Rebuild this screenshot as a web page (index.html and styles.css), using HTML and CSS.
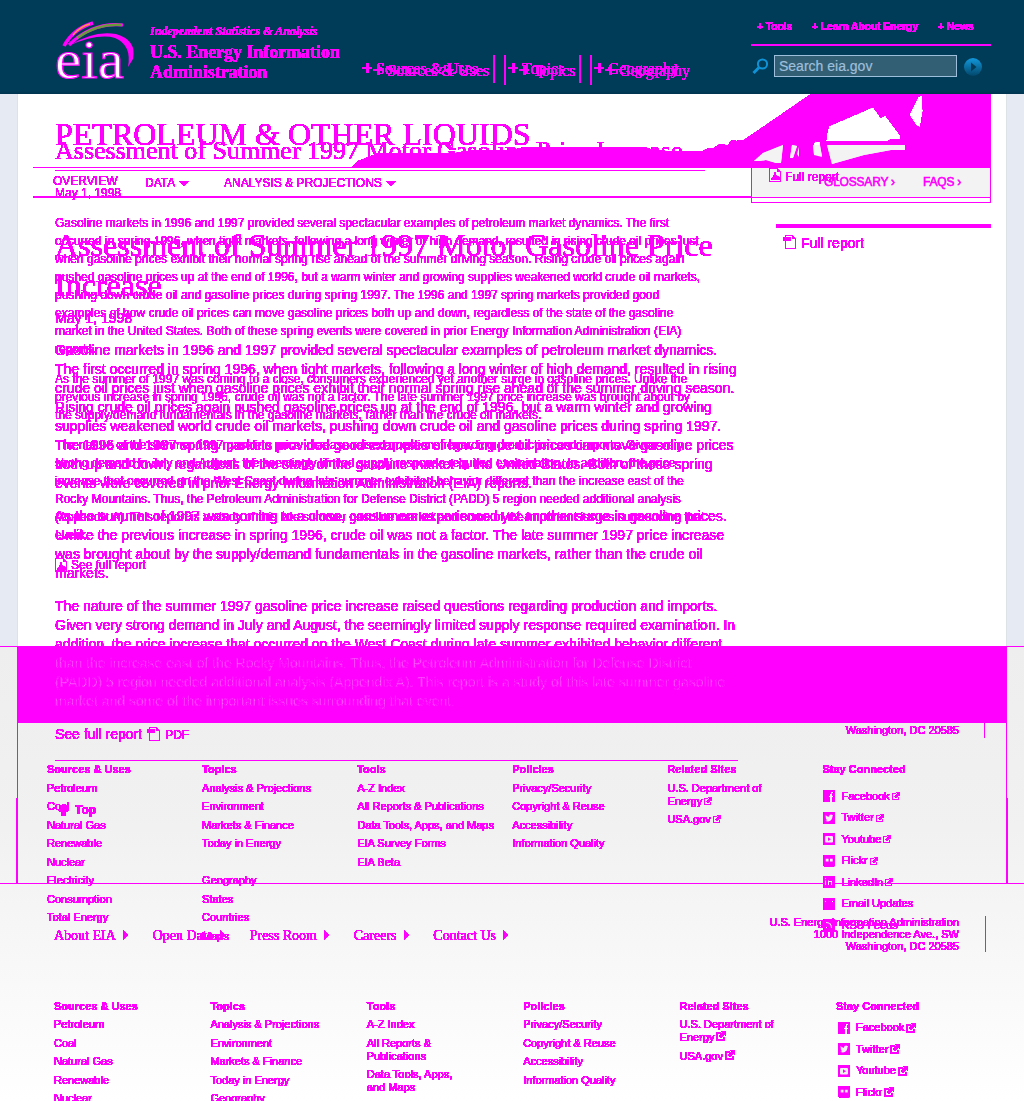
FILE: index.html
```html
<!DOCTYPE html>
<html lang="en">
<head>
<meta charset="utf-8">
<title>Assessment of Summer 1997 Motor Gasoline Price Increase</title>
<link rel="stylesheet" href="styles.css">
</head>
<body>
<svg class="defs" width="0" height="0">
  <filter id="crisp" x="0" y="0" width="100%" height="100%" color-interpolation-filters="sRGB"><feComponentTransfer><feFuncA type="linear" slope="40" intercept="-3"/></feComponentTransfer></filter>
  <symbol id="ext" viewBox="0 0 8 8"><path d="M3.5 1.5H.5v6h6V5" fill="none" stroke="currentColor" stroke-width="1"/><path d="M4 0h4v4L6.8 2.8 4 5.6 2.6 4.2 5.3 1.4z" fill="currentColor"/></symbol>
  <symbol id="fb" viewBox="0 0 12 12"><path fill-rule="evenodd" fill="currentColor" d="M0 0h12v12H9V7h1.6V5.500H9V4q0-1 1.700-.8V1.900Q7 1.300 7 4.300v1.200H5.600V7H7v5H0z"/></symbol>
  <symbol id="tw" viewBox="0 0 12 12"><path fill="currentColor" d="M0 0h12v12H0z"/><path fill="#f1f1f1" d="M2.500 3q1.500 1.800 3.500 1.700Q6 2.500 8 2.500q.8 0 1.400.6L10 3l-.5 1.300Q9.300 9.300 4.800 9.400 3.500 9.400 2.300 8.800q1.500 0 2-.8L3 7.200z"/></symbol>
  <symbol id="yt" viewBox="0 0 12 12"><path fill="currentColor" d="M0 0h12v12H0z"/><rect x="2" y="3" width="8" height="6.500" rx="1" fill="#f1f1f1"/><path fill="currentColor" d="M5 4.300l3 1.900L5 8z"/></symbol>
  <symbol id="fl" viewBox="0 0 13 13"><path fill="currentColor" d="M0 0h13v11l-1.500 2H2L0 11z"/><path fill="#f1f1f1" d="M3 4h3v3H3zM7.500 4h3v3h-3z"/></symbol>
  <symbol id="li" viewBox="0 0 12 12"><path fill="currentColor" d="M0 0h12v12H0z"/><path fill="#f1f1f1" d="M2 2h1v1H2zM2 4.500h1V9H2zM5 4.500h1V5h3v4H8V6H6v3H5z"/></symbol>
  <symbol id="em" viewBox="0 0 12 12"><path fill="currentColor" d="M0 0h12v12H0z"/><path fill="#f1f1f1" d="M2 3h1v1H2zM9 3h1v1H9z"/></symbol>
  <symbol id="rss" viewBox="0 0 12 12"><path fill="currentColor" d="M0 0h12v12H0z"/><path fill="#f1f1f1" d="M3 8h1v1H3zM3 3q6 0 6 6H8q0-5-5-5z"/></symbol>
  <symbol id="doc" viewBox="0 0 13 14"><path d="M2.500 5V.5h7l3 3v10h-10V5" fill="none" stroke="currentColor"/><path fill="currentColor" d="M0 2h8v4H0zM9 0l4 4H9z"/></symbol>
  <symbol id="pdf" viewBox="0 0 12 14"><path d="M.5.5h8l3 3v10H.5z" fill="none" stroke="currentColor"/><path d="M8 0l4 4H8zM2 12l3-5V4h2v3l4 3v2z" fill="currentColor"/></symbol>
</svg>

<div class="stack">
  <!-- page shell -->
  <div class="shell">
    <div class="shell-head"></div>
    <div class="shell-body"><div class="shell-paper"></div></div>
    <div class="shell-foot">
      <div class="band"></div>
      <div class="side side-thin"></div>
      <div class="side side-thick"></div>
      <div class="foot-rule"></div>
    </div>
  </div>

  <!-- masthead -->
  <header class="masthead">
    <svg class="logo" viewBox="55 20 80 62" width="80" height="62">
      <g fill="none" stroke-linecap="butt">
        <path d="M64 46Q73 29 93 23" stroke="#f0f" stroke-width="3.600"/><path d="M73 35Q81 26 90 24" stroke="#ffa030" stroke-width="1.300"/>
        <path d="M69 45Q92 22 123 25" stroke="#f0f" stroke-width="3.200"/><path d="M77 38Q98 23 122 25" stroke="#6b9a3a" stroke-width="2.600"/>
      </g>
      <path d="M68 46Q94 30 116 34 137 40 133 59l-5 8Q132 45 115 38 98 33 68 46z" fill="#f0f"/>
      <text class="logo-text" x="55" y="78" textLength="69" lengthAdjust="spacingAndGlyphs">eia</text>
    </svg>
    <div class="org">
      <em class="tag">Independent Statistics &amp; Analysis</em>
      <span class="agency">U.S. Energy Information<br>Administration</span>
    </div>
    <div class="overlay primary">
      <nav class="pnav pnav-a"><span><b>+</b>Sources &amp; Uses</span><span><b>+</b>Topics</span><span><b>+</b>Geography</span></nav>
      <nav class="pnav pnav-b"><span><b>+</b>Sources &amp; Uses</span><span><b>+</b>Topics</span><span><b>+</b>Geography</span></nav>
    </div>
    <div class="util">
      <nav class="unav"><span>+ Tools</span><span>+ Learn About Energy</span><span>+ News</span></nav>
      <div class="search">
        <svg width="17" height="17" viewBox="0 0 17 17"><circle cx="10.500" cy="6" r="4.600" fill="none" stroke="#0f93d6" stroke-width="2"/><path d="M7 9.500L1.500 15" stroke="#0f93d6" stroke-width="3"/></svg>
        <div class="field">Search eia.gov</div>
        <svg class="go" width="18" height="18" viewBox="0 0 18 18"><defs><linearGradient id="go" x2="0" y2="1"><stop stop-color="#1298dc"/><stop offset="1" stop-color="#02466a"/></linearGradient></defs><circle cx="9" cy="9" r="9" fill="url(#go)"/><path d="M7 4.500L12.500 9 7 13.500z" fill="#013a56"/></svg>
      </div>
    </div>
  </header>

  <!-- wide layout -->
  <div class="layer wide">
    <div class="hero">
      <div class="hero-title">PETROLEUM &amp; OTHER LIQUIDS</div>
      <div class="hero-side"></div>
      <svg class="hill" viewBox="352 94 639 73" width="639" height="73">
        <path fill="#f0f" fill-rule="evenodd" d="M352 167l6-6 8-3 10-4 20-1 60 0 10-2 40-1 30-3 100 0 30 4 37 0 3-2 8-1 4-3 5-1 4 2 5-6 4 1 8-1L811 94h180v73zM826 141l1-8 2-7 44-19 8 11 4-3 15 20 1 5-10-1-3 2zM909 115l9-18 4-2 1 16-3 17-4-3zM754 161l9-8 20-8-2 18-5 0-10-3-6 1zM827 145h78v5l-14 0-27 5-32 9zM792 145l5 1-4 12-3 0zM797 154l2-7 0 10zM813 145l2-4 5 1 0 4 2 11-8-2z"/>
        <path fill="#f3f3f3" d="M754 161l9-8 20-8-2 18-5 0-10-3-6 1zM827 145h78v5l-14 0-27 5-32 9zM792 145l5 1-4 12-3 0zM813 145l7 0 2 11-8-2z"/>
        <path fill="#f0f" d="M923 96h2v12l-2 8zM896 139h8l2 6h-10z"/>
      </svg>
    </div>
    <div class="tabs">
      <div class="tabs-main"><span class="up">OVERVIEW</span><span>DATA <i class="down"></i></span><span>ANALYSIS &amp; PROJECTIONS <i class="down"></i></span></div>
      <div class="tabs-side"><span>GLOSSARY ›</span><span>FAQS ›</span></div>
    </div>
    <div class="cols">
      <article class="wide-text">
        <h1>Assessment of Summer 1997 Motor Gasoline Price<br>Increase</h1>
        <div class="date">May 1, 1998</div>
        <p>Gasoline markets in 1996 and 1997 provided several spectacular examples of petroleum market dynamics.<br>The first occurred in spring 1996, when tight markets, following a long winter of high demand, resulted in rising<br>crude oil prices just when gasoline prices exhibit their normal spring rise ahead of the summer driving season.<br>Rising crude oil prices again pushed gasoline prices up at the end of 1996, but a warm winter and growing<br>supplies weakened world crude oil markets, pushing down crude oil and gasoline prices during spring 1997.<br>The 1996 and 1997 spring markets provided good examples of how crude oil prices can move gasoline prices<br>both up and down, regardless of the state of the gasoline market in the United States. Both of these spring<br>events were covered in prior Energy Information Administration (EIA) reports.</p>
        <p>As the summer of 1997 was coming to a close, consumers experienced yet another surge in gasoline prices.<br>Unlike the previous increase in spring 1996, crude oil was not a factor. The late summer 1997 price increase<br>was brought about by the supply/demand fundamentals in the gasoline markets, rather than the crude oil<br>markets.</p>
        <p>The nature of the summer 1997 gasoline price increase raised questions regarding production and imports.<br>Given very strong demand in July and August, the seemingly limited supply response required examination. In<br>addition, the price increase that occurred on the West Coast during late summer exhibited behavior different<br><span class="sunk">than the increase east of the Rocky Mountains. Thus, the Petroleum Administration for Defense District<br>(PADD) 5 region needed additional analysis (Appendix A). This report is a study of this late summer gasoline<br>market and some of the important issues surrounding that event.</span></p>
        <p class="see">See full report <svg width="13" height="14"><use href="#doc"/></svg> <small>PDF</small></p>
        <div class="top"><svg width="11" height="11" viewBox="0 0 11 11"><path fill="currentColor" d="M5.500 0L11 5.500 9 7 7.500 6v5h-4V6L2 7 0 5.500z"/></svg>Top</div>
      </article>
      <aside class="wide-aside"><svg width="13" height="14"><use href="#doc"/></svg>Full report</aside>
    </div>
    <div class="about">
      <nav class="links"><span>About EIA</span><span>Open Data</span><span>Press Room</span><span>Careers</span><span>Contact Us</span></nav>
      <address>U.S. Energy Information Administration<br>1000 Independence Ave., SW<br>Washington, DC 20585</address>
    </div>
    <div class="sitemap">
      <ul><li class="h">Sources &amp; Uses</li><li>Petroleum</li><li>Coal</li><li>Natural Gas</li><li>Renewable</li><li>Nuclear</li></ul>
      <ul><li class="h">Topics</li><li>Analysis &amp; Projections</li><li>Environment</li><li>Markets &amp; Finance</li><li>Today in Energy</li><li>Geography</li></ul>
      <ul><li class="h">Tools</li><li>A-Z Index</li><li>All Reports &amp;<br>Publications</li><li>Data Tools, Apps,<br>and Maps</li></ul>
      <ul><li class="h">Policies</li><li>Privacy/Security</li><li>Copyright &amp; Reuse</li><li>Accessibility</li><li>Information Quality</li></ul>
      <ul><li class="h">Related Sites</li><li>U.S. Department of<br>Energy<svg class="x"><use href="#ext"/></svg></li><li>USA.gov<svg class="x"><use href="#ext"/></svg></li></ul>
      <ul class="social"><li class="h">Stay Connected</li><li><svg class="s"><use href="#fb"/></svg>Facebook<svg class="x"><use href="#ext"/></svg></li><li><svg class="s"><use href="#tw"/></svg>Twitter<svg class="x"><use href="#ext"/></svg></li><li><svg class="s"><use href="#yt"/></svg>Youtube<svg class="x"><use href="#ext"/></svg></li><li><svg class="s"><use href="#fl"/></svg>Flickr<svg class="x"><use href="#ext"/></svg></li></ul>
    </div>
  </div>

  <!-- compact layout -->
  <div class="layer compact">
    <div class="cols">
      <article class="compact-text">
        <h2>Assessment of Summer 1997 Motor Gasoline Price Increase</h2>
        <div class="date">May 1, 1998</div>
        <p>Gasoline markets in 1996 and 1997 provided several spectacular examples of petroleum market dynamics. The first<br>occurred in spring 1996, when tight markets, following a long winter of high demand, resulted in rising crude oil prices just<br>when gasoline prices exhibit their normal spring rise ahead of the summer driving season. Rising crude oil prices again<br>pushed gasoline prices up at the end of 1996, but a warm winter and growing supplies weakened world crude oil markets,<br>pushing down crude oil and gasoline prices during spring 1997. The 1996 and 1997 spring markets provided good<br>examples of how crude oil prices can move gasoline prices both up and down, regardless of the state of the gasoline<br>market in the United States. Both of these spring events were covered in prior Energy Information Administration (EIA)<br>reports.</p>
        <p>As the summer of 1997 was coming to a close, consumers experienced yet another surge in gasoline prices. Unlike the<br>previous increase in spring 1996, crude oil was not a factor. The late summer 1997 price increase was brought about by<br>the supply/demand fundamentals in the gasoline markets, rather than the crude oil markets.</p>
        <p>The nature of the summer 1997 gasoline price increase raised questions regarding production and imports. Given very<br>strong demand in July and August, the seemingly limited supply response required examination. In addition, the price<br>increase that occurred on the West Coast during late summer exhibited behavior different than the increase east of the<br>Rocky Mountains. Thus, the Petroleum Administration for Defense District (PADD) 5 region needed additional analysis<br>(Appendix A). This report is a study of this late summer gasoline market and some of the important issues surrounding that<br>event.</p>
        <p class="see"><svg width="12" height="14"><use href="#pdf"/></svg>See full report</p>
      </article>
      <aside class="compact-aside"><svg width="12" height="14"><use href="#pdf"/></svg>Full report</aside>
    </div>
    <address>Washington, DC 20585</address>
    <div class="sitemap">
      <ul><li class="h">Sources &amp; Uses</li><li>Petroleum</li><li>Coal</li><li>Natural Gas</li><li>Renewable</li><li>Nuclear</li><li>Electricity</li><li>Consumption</li><li>Total Energy</li></ul>
      <ul><li class="h">Topics</li><li>Analysis &amp; Projections</li><li>Environment</li><li>Markets &amp; Finance</li><li>Today in Energy</li><li class="gap">Geography</li><li>States</li><li>Countries</li><li>Maps</li></ul>
      <ul><li class="h">Tools</li><li>A-Z Index</li><li>All Reports &amp; Publications</li><li>Data Tools, Apps, and Maps</li><li>EIA Survey Forms</li><li>EIA Beta</li></ul>
      <ul><li class="h">Policies</li><li>Privacy/Security</li><li>Copyright &amp; Reuse</li><li>Accessibility</li><li>Information Quality</li></ul>
      <ul><li class="h">Related Sites</li><li>U.S. Department of<br>Energy<svg class="x"><use href="#ext"/></svg></li><li>USA.gov<svg class="x"><use href="#ext"/></svg></li></ul>
      <ul class="social"><li class="h">Stay Connected</li><li><svg class="s"><use href="#fb"/></svg>Facebook<svg class="x"><use href="#ext"/></svg></li><li><svg class="s"><use href="#tw"/></svg>Twitter<svg class="x"><use href="#ext"/></svg></li><li><svg class="s"><use href="#yt"/></svg>Youtube<svg class="x"><use href="#ext"/></svg></li><li><svg class="s"><use href="#fl"/></svg>Flickr<svg class="x"><use href="#ext"/></svg></li><li><svg class="s"><use href="#li"/></svg>LinkedIn<svg class="x"><use href="#ext"/></svg></li><li><svg class="s"><use href="#em"/></svg>Email Updates</li><li><svg class="s"><use href="#rss"/></svg>RSS Feeds</li></ul>
    </div>
  </div>
</div>
</body>
</html>
```
FILE: styles.css
```css
* { box-sizing: border-box; margin: 0; padding: 0; }
body { font-family: "Liberation Sans", Arial, sans-serif; color: #f0f; width: 1024px; height: 1101px; overflow: hidden; white-space: nowrap; }
svg { flex: none; }
ul { list-style: none; }
.defs { display: block; height: 0; }
.stack { display: grid; grid-template: 1101px / 1024px; overflow: hidden; }
.stack > * { grid-area: 1 / 1; min-width: 0; }
.layer, .org, .primary, .unav { filter: url(#crisp); }

/* shell */
.shell-head { height: 94px; background: linear-gradient(#003b57 91px, #003350); }
.shell-body { height: 552px; background: #e6eaf3; padding: 0 17px; }
.shell-paper { height: 552px; background: #fff; border: solid #dde2e6; border-width: 0 1px; }
.shell-foot { height: 455px; background: linear-gradient(#eee, #f1f1f1 40%, #fff); border-top: 1px solid #f0f; }
.band { height: 76px; margin: 0 17px; background: #f0f; }
.side { border: solid #f0f; }
.side-thin { height: 75px; margin: 0 17px; border-width: 0 1px; }
.side-thick { height: 85px; margin: 0 16px; border-width: 0 2px; }
.foot-rule { height: 1px; background: #f0f; }

/* masthead */
.masthead { height: 94px; display: grid; grid-template-columns: 95px 212px 389px 240px; padding-left: 55px; }
.logo { margin-top: 20px; overflow: visible; }
.logo-text { font: 54px "Liberation Serif", serif; fill: #fff; stroke: #f0f; stroke-width: 1.2px; }
.org { font-family: "Liberation Serif", serif; font-weight: bold; padding-top: 23px; }
.tag { display: block; font-size: 12px; line-height: 16px; letter-spacing: .05px; }
.agency { display: block; font-size: 18px; line-height: 20px; padding-top: 3px; letter-spacing: -.05px; }
.overlay { display: grid; }
.overlay > * { grid-area: 1 / 1; }
.pnav { display: grid; align-content: start; font: 16px/28px "Liberation Serif", serif; }
.pnav span { height: 28px; border-right: 2px solid #f0f; }
.pnav span:last-child { border: 0; }
.pnav b { display: inline-block; width: 14px; font: bold 18px/20px "Liberation Sans", sans-serif; }
.pnav-a { padding-top: 55px; grid-template-columns: 133px 86px 1fr; }
.pnav-a span + span { padding-left: 13px; }
.pnav-b { padding: 55px 0 0 11px; line-height: 32px; grid-template-columns: 133px 86px 1fr; }
.pnav-b span { height: 30px; }
.pnav-b span + span { padding-left: 13px; }
.util { padding-top: 18px; }
.unav { display: flex; gap: 20px; height: 28px; padding-left: 6px; font: bold 11px/16px "Liberation Sans", sans-serif; letter-spacing: -.42px; border-bottom: 2px solid #f0f; }
.search { display: flex; align-items: center; padding: 9px 0 0 1px; }
.field { width: 183px; height: 22px; margin: 0 7px 0 5px; border: 1px solid #9dbfdb; background: #335f75; color: #9dbfdb; font-size: 14px; line-height: 21px; padding-left: 4px; -webkit-text-stroke: .2px #9dbfdb; }
.go { margin-top: 2px; }

/* wide layout */
.wide { padding-top: 94px; }
.hero { display: grid; height: 73px; grid-template-columns: 33px 718px 240px; }
.hero-title { grid-area: 1 / 2; padding: 20px 0 0 22px; font: 32px/40px "Liberation Serif", serif; }
.hero-side { grid-area: 1 / 3; margin-top: 51px; background: #f3f3f3; }
.hill { grid-area: 1 / 2 / 2 / 4; justify-self: end; }
.tabs { display: grid; grid-template-columns: 718px 240px; align-items: start; margin-left: 33px; height: 31px; font-size: 12px; line-height: 31px; }
.tabs-main { height: 31px; border: solid #f0f; border-width: 1px 0 2px; display: grid; grid-template-columns: 92px 79px 1fr; padding-left: 20px; }
.tabs-main .up { line-height: 27px; }
.down { display: inline-block; border: 5.5px solid transparent; border-top-color: #f0f; border-bottom: 0; margin: 0 0 1px 1px; }
.tabs-side { height: 36px; line-height: 29px; background: linear-gradient(#f3f3f3 29px, #f0f 29px 30px, #fff 30px); border: 1px solid #f0f; display: grid; grid-template-columns: 99px 1fr; padding-left: 72px; letter-spacing: -.2px; -webkit-text-stroke: .6px #f0f; }
.wide .cols { display: grid; grid-template-columns: 721px 215px; padding-left: 55px; height: 718px; }
.wide-text { padding-top: 27px; font-size: 14px; line-height: 19px; }
h1 { font: 32px/40px "Liberation Serif", serif; }
.wide .date { margin: 4px 0 13px; }
.wide p { margin-bottom: 14px; }
.sunk { color: #fff; -webkit-text-stroke: 1px #f0f; }
.wide .see { width: 683px; padding-bottom: 15px; border-bottom: 1px solid #f0f; margin-bottom: 40px; display: flex; gap: 5px; }
.see small { font-size: 12px; line-height: 20px; }
.see svg { margin-top: 2px; }
.top { display: flex; gap: 6px; padding-left: 3px; font-weight: bold; font-size: 12px; align-items: center; }
.wide-aside { align-self: start; margin-top: 26px; border-top: 4px solid #f0f; padding: 6px 7px; display: flex; gap: 5px; font-size: 14px; line-height: 18px; }
.wide-aside svg { margin-top: 1px; }
.about { display: flex; justify-content: space-between; height: 84px; padding: 0 38px 0 54px; align-items: start; }
.links { display: flex; gap: 24.8px; font: 14px/19px "Liberation Serif", serif; padding-top: 10px; }
.links span::after { content: ""; display: inline-block; border: 5px solid transparent; border-left-color: #f0f; border-right: 0; margin-left: 7px; }
address { font: 11px/12px "Liberation Sans", sans-serif; text-align: right; padding-right: 26px; border-right: 1px solid #f0f; -webkit-text-stroke: .2px #f0f; }

/* site map columns */
.sitemap { display: grid; grid-template-columns: repeat(6, 156.4px); font-size: 11px; line-height: 13px; padding-left: 54px; -webkit-text-stroke: .2px #f0f; }
.sitemap li { margin-bottom: 5.5px; }
.h { font-weight: bold; -webkit-text-stroke: 0; }
.wide .h { margin-bottom: 5px; }
.sitemap .gap { margin-top: 24px; }
.social li { display: flex; align-items: center; height: 16px; }
.sitemap .social .h { height: 13px; }
.s { width: 12px; height: 12px; margin: 0 6px 0 1px; }
.x { width: 8px; height: 8px; margin-left: 2px; }
.wide .x { width: 10px; height: 10px; }
.wide .s { margin-left: 2px; }
.wide .social .h { margin-bottom: 6.5px; }

/* compact layout */
.compact { padding-top: 135px; }
.compact .cols { display: grid; grid-template-columns: 714px 1fr; padding-left: 55px; height: 588px; }
.compact-text { font-size: 12px; line-height: 18px; }
h2 { font: 26px/32px "Liberation Serif", serif; height: 36px; width: 650px; border-bottom: 1px solid #f0f; }
.compact .date { padding-top: 13px; margin-bottom: 12px; }
.compact p { margin-bottom: 12px; }
.compact .see { display: flex; gap: 4px; }
.compact-aside { display: flex; gap: 4px; font-size: 12px; padding-top: 33px; line-height: 18px; }
.compact address { margin-right: 39px; padding-right: 25px; height: 15px; line-height: 15px; }
.compact .sitemap { grid-template-columns: repeat(6, 155.1px); padding: 25px 0 0 47px; }
.compact .social .h { margin-bottom: 12px; }
```
